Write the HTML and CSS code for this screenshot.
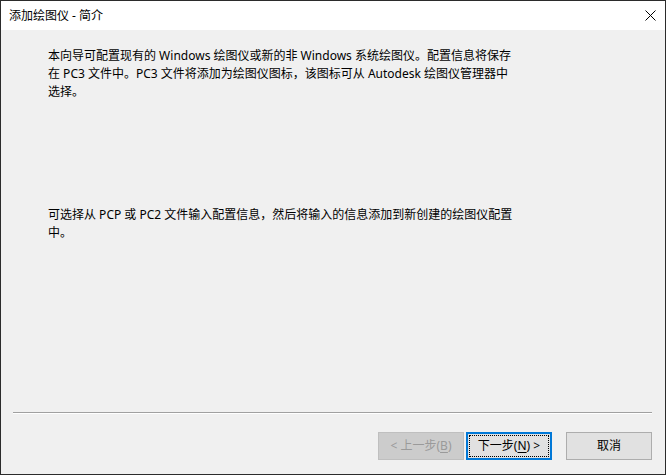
FILE: index.html
```html
<!DOCTYPE html>
<html lang="zh-CN">
<head>
<meta charset="utf-8">
<title>添加绘图仪 - 简介</title>
<link rel="stylesheet" href="styles.css">
</head>
<body>
<div class="window">
  <div class="titlebar">
    <span class="title">添加绘图仪 - 简介</span>
    <span class="close" aria-label="关闭">
      <svg width="11" height="11" viewBox="0 0 11 11"><path d="M0.5 0.5 L10.5 10.5 M10.5 0.5 L0.5 10.5" stroke="#000" stroke-width="1" fill="none"/></svg>
    </span>
  </div>
  <div class="content">
    <p class="para">本向导可配置现有的 Windows 绘图仪或新的非 Windows 系统绘图仪。配置信息将保存<br>在 PC3 文件中。PC3 文件将添加为绘图仪图标，该图标可从 Autodesk 绘图仪管理器中<br>选择。</p>
    <p class="para para-second">可选择从 PCP 或 PC2 文件输入配置信息，然后将输入的信息添加到新创建的绘图仪配置<br>中。</p>
  </div>
  <div class="separator"></div>
  <div class="buttons">
    <button class="btn btn-disabled" disabled>&lt; 上一步(<u>B</u>)</button>
    <button class="btn btn-default">下一步(<u>N</u>) &gt;</button>
    <button class="btn btn-cancel">取消</button>
  </div>
</div>
</body>
</html>
```
FILE: styles.css
```css
* { box-sizing: border-box; }
html, body { margin: 0; padding: 0; }
body {
  font-family: "Noto Sans", "Noto Sans CJK SC", sans-serif;
  font-size: 12px;
  color: #000;
  background: #f0f0f0;
}
.window {
  width: 666px;
  height: 475px;
  border: 1px solid #2b2b2b;
  background: #f0f0f0;
  display: flex;
  flex-direction: column;
}
.titlebar {
  height: 29px;
  background: #fff;
  display: flex;
  align-items: center;
  justify-content: space-between;
  padding: 0 9px 0 8px;
  flex: none;
}
.title {
  font-size: 12px;
  line-height: 16px;
  margin-top: 1px;
}
.close {
  display: flex;
  width: 11px;
  height: 11px;
  margin-top: -1px;
}
.content {
  height: 382px;
  flex: none;
  padding: 17px 0 0 47px;
}
.para {
  margin: 0;
  font-size: 12px;
  line-height: 18px;
  white-space: nowrap;
}
.para-second {
  margin-top: 105px;
}
.separator {
  flex: none;
  margin: 0 13px 0 12px;
  border-top: 1px solid #a0a0a0;
  border-bottom: 1px solid #fff;
  height: 2px;
}
.buttons {
  flex: none;
  display: flex;
  justify-content: flex-end;
  padding: 18px 13px 14px 0;
}
.btn {
  width: 86px;
  height: 28px;
  font-family: inherit;
  font-size: 12px;
  line-height: 16px;
  padding: 0;
  background: #e1e1e1;
  border: 1px solid #adadad;
  color: #000;
  border-radius: 0;
}
.btn u { text-underline-offset: 2px; }
.btn-disabled {
  background: #cccccc;
  border-color: #bfbfbf;
  color: #9a9a9a;
}
.btn-default {
  margin-left: 2px;
  border: 2px solid #0078d7;
  outline: 1px dotted #000;
  outline-offset: -4px;
}
.btn-cancel {
  margin-left: 14px;
}
```
